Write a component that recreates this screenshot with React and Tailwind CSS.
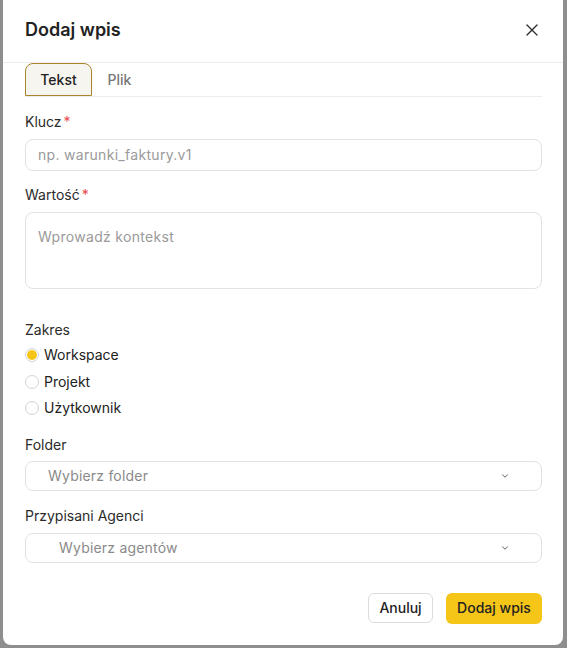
import { useState } from "react";
import { X, ChevronDown } from "lucide-react";

const font = { fontFamily: "Inter, 'Noto Sans', sans-serif" };

const Label = ({ children, required }) => (
  <p className="text-sm leading-5 text-[#2b2b2b]">
    {children}
    {required ? <span className="ml-0.5 text-[#e5484d]">*</span> : null}
  </p>
);

const Radio = ({ label, checked, onClick }) => (
  <button type="button" onClick={onClick} className="flex h-[26.5px] items-center gap-[5px]">
    <span className="flex h-[14px] w-[14px] items-center justify-center rounded-full border border-[#d4d4d4] bg-white">
      {checked ? <span className="h-[10px] w-[10px] rounded-full bg-[#f5c518]" /> : null}
    </span>
    <span className="text-sm text-[#222]">{label}</span>
  </button>
);

const Select = ({ placeholder, indent }) => (
  <div className={`flex h-[30px] items-center justify-between rounded-lg border border-[#e2e2e2] bg-white pr-[31px] ${indent}`}>
    <span className="text-sm tracking-[0.2px] text-[#8a8a8a]">{placeholder}</span>
    <ChevronDown size={10} strokeWidth={2} className="text-[#444]" />
  </div>
);

export default function App() {
  const [tab, setTab] = useState("text");
  const [scope, setScope] = useState("workspace");

  return (
    <div className="h-[648px] w-[567px] bg-[#8e8e8e] pl-[3px]" style={font}>
      <div className="flex h-[645px] w-[560px] flex-col rounded-b-lg bg-white">
        <div className="flex h-[63px] items-center justify-between border-b border-[#ececec] pl-[22px] pr-[21px] pb-[2px]">
          <h3 className="text-lg font-semibold text-[#222]">Dodaj wpis</h3>
          <button type="button" className="text-[#333]">
            <X size={20} strokeWidth={1.6} />
          </button>
        </div>

        <div className="flex flex-1 flex-col pl-[22px] pr-[21px]">
          <div className="flex h-[34px] items-end border-b border-[#ececec]">
            <button
              type="button"
              onClick={() => setTab("text")}
              className={`h-[33px] w-[67px] rounded-t-lg text-sm font-medium ${tab === "text" ? "border border-[#a8862c] bg-[#f7f5f0] text-[#222]" : "text-[#777]"}`}
            >
              Tekst
            </button>
            <button
              type="button"
              onClick={() => setTab("file")}
              className={`ml-[9px] h-[33px] w-[37px] rounded-t-lg text-sm font-medium ${tab === "file" ? "border border-[#a8862c] bg-[#f7f5f0] text-[#222]" : "text-[#777]"}`}
            >
              Plik
            </button>
          </div>

          <div className="mt-[15px] flex flex-col gap-[7px]">
            <Label required>Klucz</Label>
            <div className="flex h-[32px] items-center rounded-lg border border-[#e2e2e2] px-3">
              <span className="text-sm tracking-[0.3px] text-[#9a9a9a]">np. warunki_faktury.v1</span>
            </div>
          </div>

          <div className="mt-[14px] flex flex-col gap-[7px]">
            <Label required>Wartość</Label>
            <div className="h-[77px] rounded-lg border border-[#e2e2e2] px-3 pt-[11px]">
              <span className="text-sm tracking-[0.3px] text-[#9a9a9a]">Wprowadź kontekst</span>
            </div>
          </div>

          <div className="mt-[31px] flex flex-col">
            <Label>Zakres</Label>
            <div className="mt-[2px] flex flex-col items-start">
              <Radio label="Workspace" checked={scope === "workspace"} onClick={() => setScope("workspace")} />
              <Radio label="Projekt" checked={scope === "project"} onClick={() => setScope("project")} />
              <Radio label="Użytkownik" checked={scope === "user"} onClick={() => setScope("user")} />
            </div>
          </div>

          <div className="mt-[13px] flex flex-col gap-[6px]">
            <Label>Folder</Label>
            <Select placeholder="Wybierz folder" indent="pl-[22px]" />
          </div>

          <div className="mt-[15px] flex flex-col gap-[7px]">
            <Label>Przypisani Agenci</Label>
            <Select placeholder="Wybierz agentów" indent="pl-[33px]" />
          </div>

          <div className="mt-[30px] flex justify-end gap-[13px]">
            <button type="button" className="h-[30px] w-[65px] rounded-md border border-[#dcdcdc] bg-white text-sm font-medium text-[#222]">
              Anuluj
            </button>
            <button type="button" className="h-[31px] w-[96px] rounded-md bg-[#f5c518] text-sm font-medium text-[#222]">
              Dodaj wpis
            </button>
          </div>
        </div>
      </div>
    </div>
  );
}
